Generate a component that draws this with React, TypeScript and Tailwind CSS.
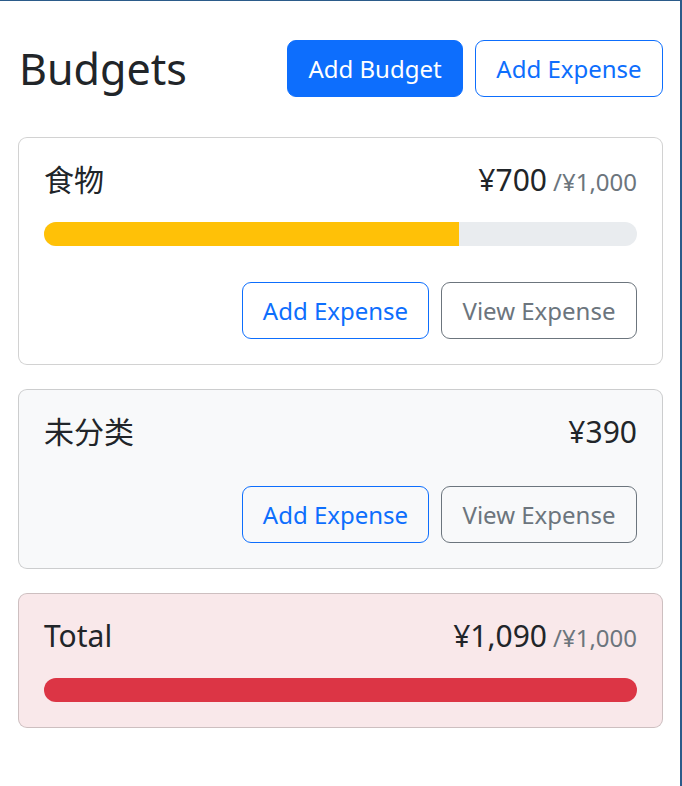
import React from "react";

const font = {
  fontFamily: '"Noto Sans", "Noto Sans CJK SC", sans-serif',
};

function Progress({ pct, color }: { pct: number; color: string }) {
  return (
    <div className="h-[24px] w-full overflow-hidden rounded-full bg-[#e9ecef]">
      <div className={`h-full ${color}`} style={{ width: `${pct}%` }} />
    </div>
  );
}

function CardButtons() {
  return (
    <div className="mt-[36px] flex items-center justify-end gap-[12px]">
      <button className="flex h-[57px] w-[187px] items-center justify-center rounded-[9px] border border-[#0d6efd] text-[24px] text-[#0d6efd]">
        Add Expense
      </button>
      <button className="flex h-[57px] w-[196px] items-center justify-center rounded-[9px] border border-[#6c757d] text-[24px] text-[#6c757d]">
        View Expense
      </button>
    </div>
  );
}

function Title({ name, amount, max }: { name: string; amount: string; max?: string }) {
  return (
    <div className="flex h-[36px] items-baseline justify-between text-[30px] leading-[36px] text-[#212529]">
      <div>{name}</div>
      <div className="flex items-baseline">
        {amount}
        {max && <span className="ml-[6px] text-[24px] text-[#6c757d]">{max}</span>}
      </div>
    </div>
  );
}

export default function App() {
  return (
    <div
      className="min-h-[786px] w-full border-t border-r-2 border-[#2b5b8a] bg-white pl-[18px] pr-[17px] pt-[39px]"
      style={font}
    >
      <div className="mb-[40px] flex items-center gap-[12px]">
        <h1 className="mr-auto pl-[1px] text-[43px] leading-[52px] text-[#212529]">Budgets</h1>
        <button className="flex h-[57px] w-[176px] items-center justify-center rounded-[9px] border border-[#0d6efd] bg-[#0d6efd] text-[24px] text-white">
          Add Budget
        </button>
        <button className="flex h-[57px] w-[188px] items-center justify-center rounded-[9px] border border-[#0d6efd] text-[24px] text-[#0d6efd]">
          Add Expense
        </button>
      </div>

      <div className="flex flex-col gap-[24px]">
        <div className="rounded-[9px] border border-black/[0.175] bg-white px-[25px] pt-[24px] pb-[25px]">
          <Title name="食物" amount="¥700" max="/¥1,000" />
          <div className="mt-[24px]">
            <Progress pct={70} color="bg-[#ffc107]" />
          </div>
          <CardButtons />
        </div>

        <div className="rounded-[9px] border border-black/[0.175] bg-[#f8f9fa] px-[25px] pt-[24px] pb-[25px]">
          <Title name="未分类" amount="¥390" />
          <CardButtons />
        </div>

        <div className="rounded-[9px] border border-black/[0.175] bg-[#f9e8ea] px-[25px] pt-[24px] pb-[25px]">
          <Title name="Total" amount="¥1,090" max="/¥1,000" />
          <div className="mt-[24px]">
            <Progress pct={100} color="bg-[#dc3545]" />
          </div>
        </div>
      </div>
    </div>
  );
}
